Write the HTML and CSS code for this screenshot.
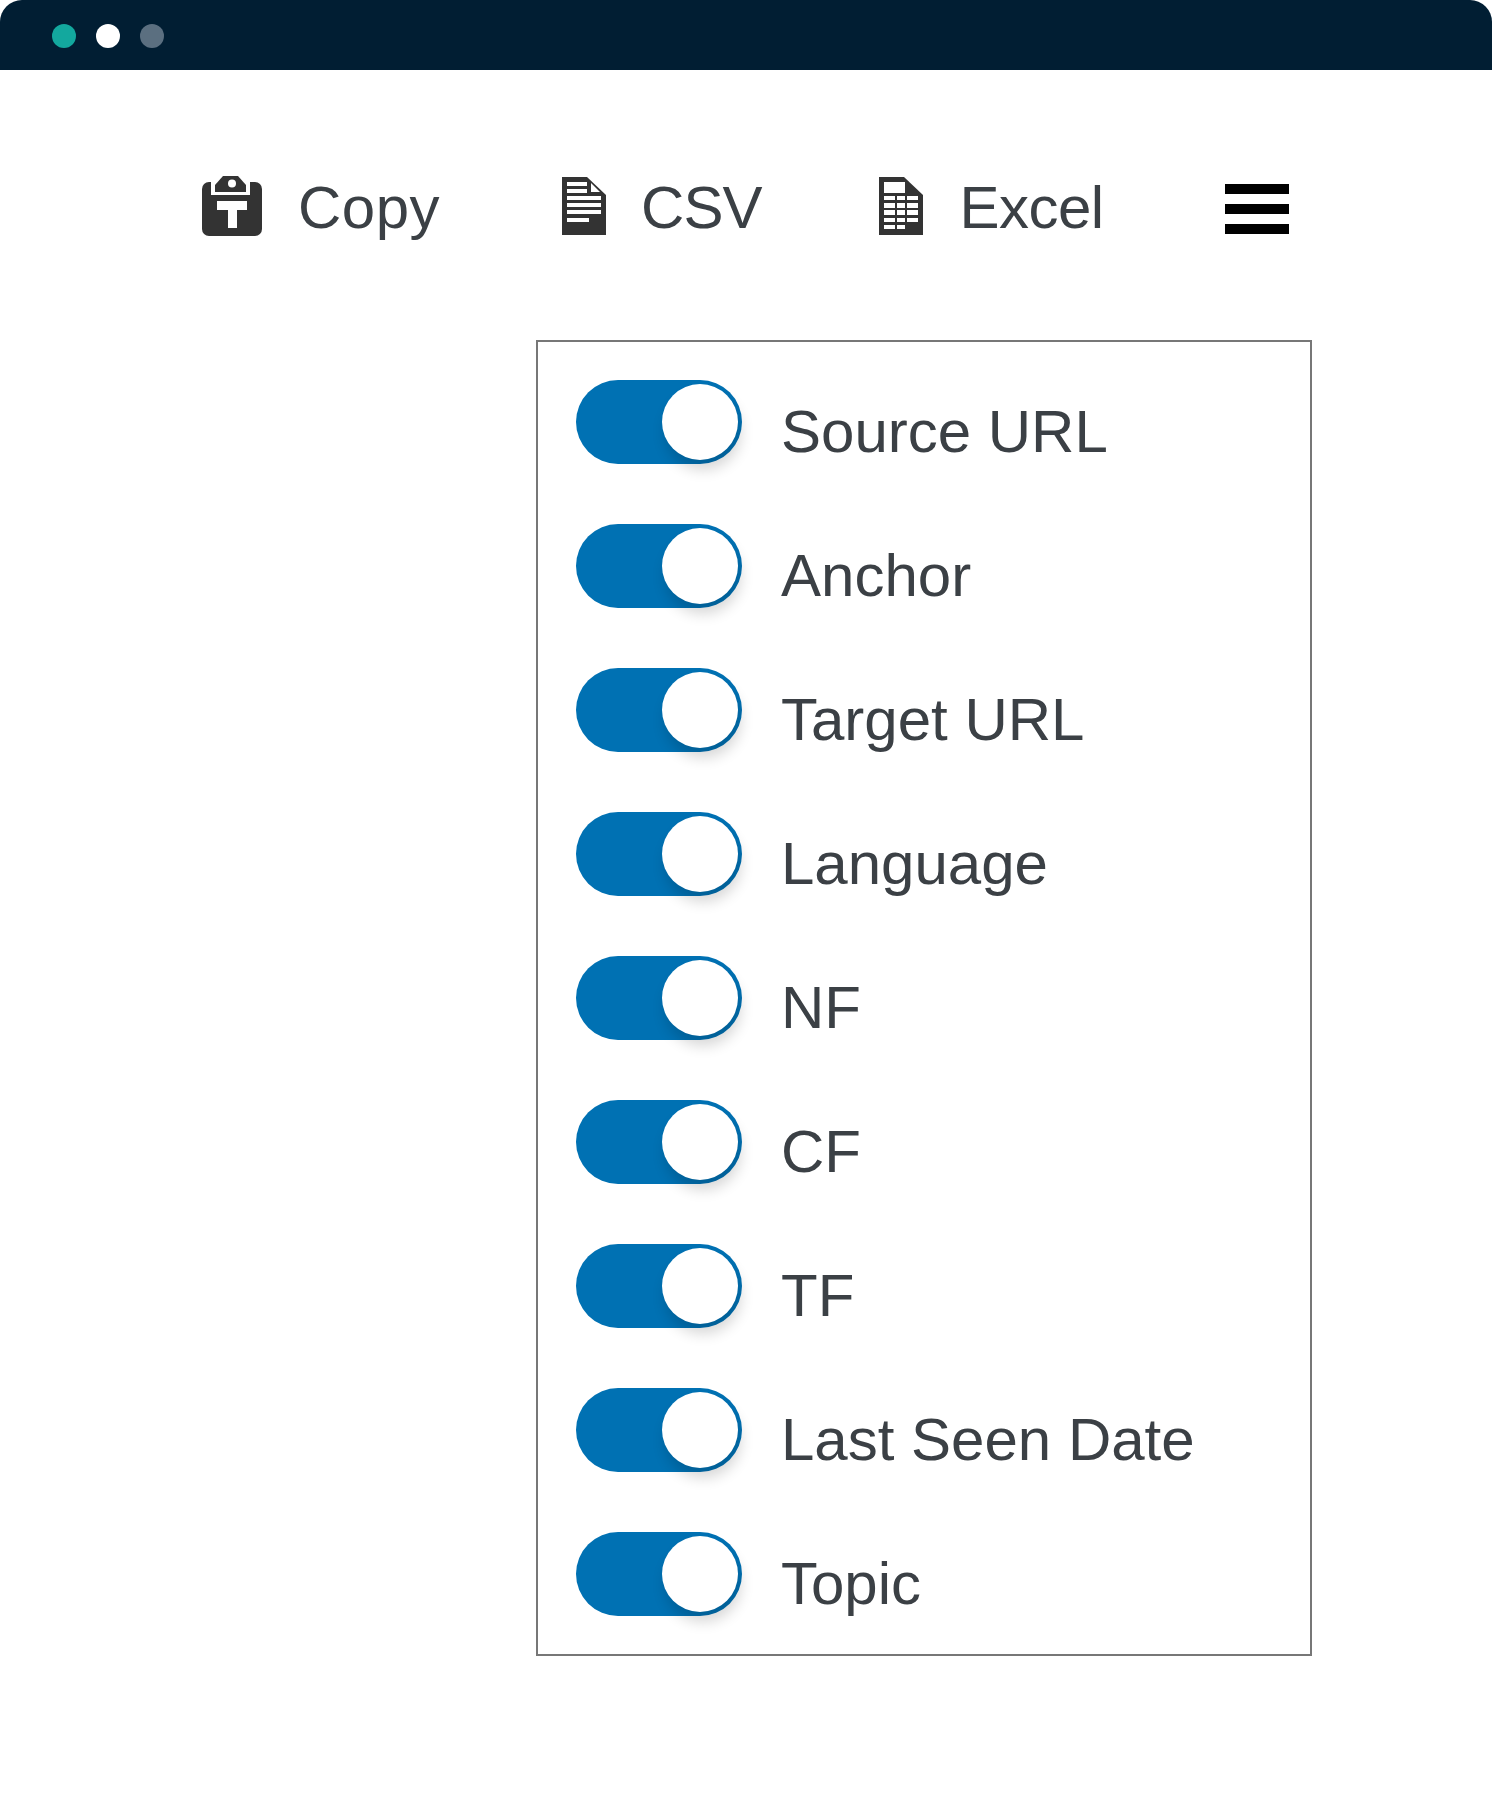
FILE: index.html
```html
<!DOCTYPE html>
<html lang="en">
<head>
    <meta charset="UTF-8">
    <meta name="viewport" content="width=device-width, initial-scale=1.0">
    <title>Column visibility</title>
    <link rel="stylesheet" href="styles.css">
</head>
<body>
    <div class="title-bar">
        <span class="dot dot-green"></span>
        <span class="dot dot-white"></span>
        <span class="dot dot-grey"></span>
    </div>

    <div class="toolbar">
        <a class="tool tool-copy">
            <svg class="icon" width="60" height="60" viewBox="0 0 60 60">
                <rect y="6" width="60" height="54" rx="7" fill="#333"/>
                <rect x="9" y="6" width="39" height="13" fill="#fff"/>
                <path d="M13 16V9L21 0H36L44 9V16Z" fill="#333"/>
                <circle cx="30" cy="7.5" r="4" fill="#fff"/>
                <path d="M15 25H45V34H35V52H26V34H15Z" fill="#fff"/>
            </svg>
            <span class="tool-text">Copy</span>
        </a>
        <a class="tool tool-csv">
            <svg class="icon" width="44" height="58" viewBox="0 0 44 58">
                <path d="M0 0H25L44 18V58H0Z" fill="#333"/>
                <path d="M29 6L38 15H29Z" fill="#fff"/>
                <path d="M5 5H25V9H5ZM5 12H25V16H5ZM5 19H39V23H5ZM5 26H39V30H5ZM5 33H39V37H5ZM5 41H27V45H5Z" fill="#fff"/>
            </svg>
            <span class="tool-text">CSV</span>
        </a>
        <a class="tool tool-excel">
            <svg class="icon" width="44" height="58" viewBox="0 0 44 58">
                <path d="M0 0H25L44 18V58H0Z" fill="#333"/>
                <path d="M5 5H26V16H5Z" fill="#fff"/>
                <path d="M5 19H16V23H5ZM18 19H26V23H18ZM28 19H39V23H28ZM5 26H16V31H5ZM18 26H26V31H18ZM28 26H39V31H28ZM5 33H16V38H5ZM18 33H26V38H18ZM28 33H39V38H28ZM5 41H16V45H5ZM18 41H26V45H18ZM28 41H39V45H28ZM5 48H16V52H5ZM18 48H26V52H18Z" fill="#fff"/>
            </svg>
            <span class="tool-text">Excel</span>
        </a>
        <div class="menu-icon">
            <span></span>
            <span></span>
            <span></span>
        </div>
    </div>

    <div class="column-list">
        <div class="column-row"><span class="toggle"><span class="knob"></span></span><span class="label">Source URL</span></div>
        <div class="column-row"><span class="toggle"><span class="knob"></span></span><span class="label">Anchor</span></div>
        <div class="column-row"><span class="toggle"><span class="knob"></span></span><span class="label">Target URL</span></div>
        <div class="column-row"><span class="toggle"><span class="knob"></span></span><span class="label">Language</span></div>
        <div class="column-row"><span class="toggle"><span class="knob"></span></span><span class="label">NF</span></div>
        <div class="column-row"><span class="toggle"><span class="knob"></span></span><span class="label">CF</span></div>
        <div class="column-row"><span class="toggle"><span class="knob"></span></span><span class="label">TF</span></div>
        <div class="column-row"><span class="toggle"><span class="knob"></span></span><span class="label">Last Seen Date</span></div>
        <div class="column-row"><span class="toggle"><span class="knob"></span></span><span class="label">Topic</span></div>
    </div>
</body>
</html>
```

FILE: styles.css
```css
body, html {
    margin: 0;
    padding: 0;
    background: #fff;
    font-family: "Liberation Sans", Arial, sans-serif;
    color: #3b4045;
}

.title-bar {
    height: 70px;
    background: #011e33;
    border-radius: 22px 22px 0 0;
    display: flex;
    align-items: center;
    gap: 20px;
    padding: 0 52px 0;
    box-sizing: border-box;
}

.dot {
    width: 24px;
    height: 24px;
    border-radius: 50%;
    margin-top: 1px;
}

.dot-green { background: #13a89e; }
.dot-white { background: #fff; }
.dot-grey { background: #5b6f80; }

.toolbar {
    display: flex;
    align-items: flex-start;
    height: 164px;
    padding: 106px 0 0 202px;
    font-size: 60px;
    line-height: 60px;
}

.tool {
    display: flex;
    align-items: center;
    gap: 36px;
    height: 60px;
}

.tool-text {
    padding-top: 3px;
}

.tool-copy { margin-right: 122px; }
.tool-copy .tool-text { letter-spacing: 0.5px; }
.tool-csv { gap: 35px; margin-right: 118px; }
.tool-csv .tool-text { letter-spacing: -1px; }
.tool-excel { margin-right: 121px; }
.tool-excel .tool-text { letter-spacing: -0.5px; }

.menu-icon {
    width: 64px;
    height: 50px;
    margin-top: 8px;
    display: flex;
    flex-direction: column;
    justify-content: space-between;
}

.menu-icon span {
    height: 10px;
    background: #000;
}

.column-list {
    width: 776px;
    margin-left: 536px;
    box-sizing: border-box;
    border: 2px solid #777;
    padding: 38px;
    display: flex;
    flex-direction: column;
    gap: 60px;
}

.column-row {
    display: flex;
    align-items: center;
    gap: 39px;
    height: 84px;
}

.toggle {
    width: 166px;
    height: 84px;
    box-sizing: border-box;
    padding: 4px;
    border-radius: 42px;
    background: #0071b3;
    display: flex;
    justify-content: flex-end;
}

.knob {
    width: 76px;
    height: 76px;
    border-radius: 50%;
    background: #fff;
    box-shadow: 3px 10px 14px rgba(0, 0, 0, 0.16);
}

.label {
    font-size: 60px;
    line-height: 70px;
    padding-top: 20px;
}
```
